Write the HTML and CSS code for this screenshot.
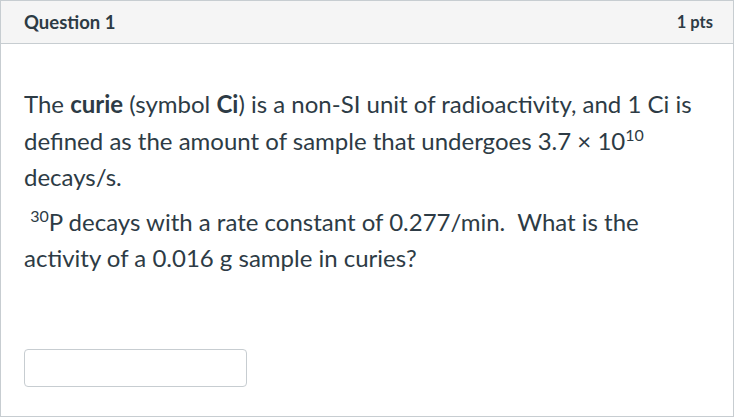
FILE: index.html
```html
<!DOCTYPE html>
<html>
<head>
<meta charset="utf-8">
<link rel="stylesheet" href="styles.css">
</head>
<body>
<div class="question">
  <div class="header">
    <span class="title">Question 1</span>
    <span class="pts">1 pts</span>
  </div>
  <div class="content">
    <p class="para">The <strong>curie</strong> (symbol <strong>Ci</strong>) is a non-SI unit of radioactivity, and 1 Ci is defined as the amount of sample that undergoes 3.7 × 10<sup>10</sup> decays/s.</p>
    <p class="para">&nbsp;<sup>30</sup>P decays with a rate constant of 0.277/min.&nbsp; What is the activity of a 0.016 g sample in curies?</p>
    <div class="answer"><input class="input" type="text"></div>
  </div>
</div>
</body>
</html>
```

FILE: styles.css
```css
html, body {
  margin: 0;
  padding: 0;
  background: #fff;
}
body {
  font-family: Lato, "Open Sans", sans-serif;
  color: #2d3b45;
}
.question {
  width: 732px;
  height: 415px;
  border: 1px solid #c7cdd1;
  box-sizing: content-box;
  display: flex;
  flex-direction: column;
}
.header {
  height: 42px;
  background: #f5f5f5;
  border-bottom: 1px solid #c7cdd1;
  display: flex;
  align-items: center;
  justify-content: space-between;
  padding: 0 20px 0 23px;
  font-weight: bold;
  color: #2d3b45;
}
.title {
  font-size: 18.5px;
}
.pts {
  font-size: 16.5px;
}
.content {
  padding: 42px 23px 0 23px;
  font-size: 24px;
  line-height: 36.5px;
}
.para {
  margin: 0 0 8px 0;
}
.para sup {
  font-size: 16px;
  line-height: 0;
  vertical-align: 0.55em;
}
.answer {
  margin-top: 71px;
}
.input {
  width: 223px;
  height: 38px;
  box-sizing: border-box;
  border: 1px solid #c7cdd1;
  border-radius: 4px;
  padding: 0 8px;
  margin: 0;
  font-family: Lato, sans-serif;
  font-size: 16px;
}
```
